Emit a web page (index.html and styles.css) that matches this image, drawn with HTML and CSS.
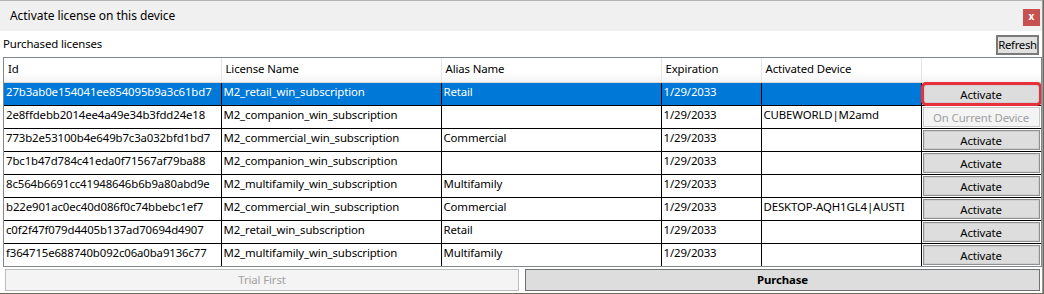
FILE: index.html
```html
<!DOCTYPE html>
<html>
<head>
<meta charset="utf-8">
<link rel="stylesheet" href="styles.css">
</head>
<body>
<div class="window">
  <div class="titlebar">
    <span class="title">Activate license on this device</span>
    <span class="close">x</span>
  </div>
  <div class="content">
    <div class="toolbar">
      <span class="label">Purchased licenses</span>
      <button class="btn refresh">Refresh</button>
    </div>
    <div class="grid">
      <table>
        <colgroup>
          <col class="c-id"><col class="c-name"><col class="c-alias"><col class="c-exp"><col class="c-dev"><col class="c-act">
        </colgroup>
        <thead>
          <tr><th>Id</th><th>License Name</th><th>Alias Name</th><th>Expiration</th><th>Activated Device</th><th></th></tr>
        </thead>
        <tbody>
          <tr class="sel"><td>27b3ab0e154041ee854095b9a3c61bd7</td><td>M2_retail_win_subscription</td><td>Retail</td><td>1/29/2033</td><td></td><td class="act"><button class="btn row-btn hl">Activate</button></td></tr>
          <tr><td>2e8ffdebb2014ee4a49e34b3fdd24e18</td><td>M2_companion_win_subscription</td><td></td><td>1/29/2033</td><td>CUBEWORLD|M2amd</td><td class="act"><button class="btn row-btn disabled">On Current Device</button></td></tr>
          <tr><td>773b2e53100b4e649b7c3a032bfd1bd7</td><td>M2_commercial_win_subscription</td><td>Commercial</td><td>1/29/2033</td><td></td><td class="act"><button class="btn row-btn">Activate</button></td></tr>
          <tr><td>7bc1b47d784c41eda0f71567af79ba88</td><td>M2_companion_win_subscription</td><td></td><td>1/29/2033</td><td></td><td class="act"><button class="btn row-btn">Activate</button></td></tr>
          <tr><td>8c564b6691cc41948646b6b9a80abd9e</td><td>M2_multifamily_win_subscription</td><td>Multifamily</td><td>1/29/2033</td><td></td><td class="act"><button class="btn row-btn">Activate</button></td></tr>
          <tr><td>b22e901ac0ec40d086f0c74bbebc1ef7</td><td>M2_commercial_win_subscription</td><td>Commercial</td><td>1/29/2033</td><td>DESKTOP-AQH1GL4|AUSTI</td><td class="act"><button class="btn row-btn">Activate</button></td></tr>
          <tr><td>c0f2f47f079d4405b137ad70694d4907</td><td>M2_retail_win_subscription</td><td>Retail</td><td>1/29/2033</td><td></td><td class="act"><button class="btn row-btn">Activate</button></td></tr>
          <tr><td>f364715e688740b092c06a0ba9136c77</td><td>M2_multifamily_win_subscription</td><td>Multifamily</td><td>1/29/2033</td><td></td><td class="act"><button class="btn row-btn">Activate</button></td></tr>
        </tbody>
      </table>
    </div>
    <div class="footer">
      <button class="btn big disabled">Trial First</button>
      <button class="btn big primary">Purchase</button>
    </div>
  </div>
</div>
</body>
</html>
```

FILE: styles.css
```css
* { box-sizing: border-box; }
html, body { margin: 0; padding: 0; }
body {
  width: 1044px;
  height: 294px;
  overflow: hidden;
  background: #6b6b5a;
  font-family: "Noto Sans", "Open Sans", sans-serif;
  font-size: 11.4px;
  letter-spacing: -0.12px;
  color: #000;
}
.window {
  width: 1043px;
  height: 293px;
  background: #fff;
  border-top: 1px solid #b4b4b4;
  border-right: 1px solid #9a9a9a;
  display: flex;
  flex-direction: column;
}
.titlebar {
  height: 30px;
  flex: none;
  background: #f0f0f0;
  display: flex;
  align-items: center;
  justify-content: space-between;
  padding: 0 2px 0 10px;
}
.title { font-size: 12px; margin-top: -2px; letter-spacing: -0.05px; }
.close {
  width: 17px;
  height: 17px;
  background: #c75050;
  color: #fff;
  font-weight: bold;
  font-size: 10px;
  line-height: 15px;
  text-align: center;
  margin-top: 2px;
  letter-spacing: 0;
}
.content {
  flex: 1;
  display: flex;
  flex-direction: column;
  padding: 0 0 0 3px;
}
.toolbar {
  height: 26px;
  flex: none;
  display: flex;
  align-items: flex-start;
  justify-content: space-between;
  padding-top: 4px;
  padding-right: 3px;
}
.label { line-height: 14px; margin-top: 2px; }
.btn {
  font-family: inherit;
  font-size: 11.4px;
  letter-spacing: -0.12px;
  color: #000;
  background: #e1e1e1;
  border: 1px solid #adadad;
  padding: 0;
  margin: 0;
}
.refresh {
  width: 43px;
  height: 20px;
  border: 2px solid #7a7a7a;
  line-height: 14px;
  white-space: nowrap;
  overflow: hidden;
  letter-spacing: -0.3px;
}
.grid {
  flex: none;
  border: 1px solid #828790;
  width: 1039px;
  height: 210px;
  overflow: hidden;
}
table {
  border-collapse: collapse;
  table-layout: fixed;
  width: 1037px;
}
.c-id { width: 217px; }
.c-name { width: 220px; }
.c-alias { width: 220px; }
.c-exp { width: 100px; }
.c-dev { width: 160px; }
.c-act { width: 120px; }
thead tr { height: 24px; }
tbody tr { height: 23px; }
th {
  font-weight: normal;
  text-align: left;
  padding: 0 4px 1px 4px;
  line-height: 14px;
  background: linear-gradient(#ffffff, #ffffff 60%, #f4f4f4);
  border-right: 1px solid #e5e5e5;
  border-bottom: 1px solid #d5d5d5;
  white-space: nowrap;
}
th:last-child { border-right: none; }
td {
  padding: 0 2px 3px 2px;
  line-height: 14px;
  border: 1px solid #000;
  white-space: nowrap;
  overflow: hidden;
  vertical-align: middle;
}
tbody tr:first-child td { border-top: none; }
td:first-child { border-left: none; }
td:last-child { border-right: none; }
tbody tr:last-child td { border-bottom: none; }
tr.sel td { background: #0078d7; color: #fff; }
tr.sel td.act { background: #fff; }
td.act { padding: 0 0 0 1px; vertical-align: middle; overflow: visible; }
.row-btn {
  display: block;
  width: 117px;
  height: 20px;
  border: 1px solid #8f8f8f;
  box-shadow: inset 0 0 0 1px #d0d0d0;
  background: #dddddd;
  line-height: 16px;
  padding-top: 2px;
}
.row-btn.hl {
  outline: 3px solid #e8303a;
  outline-offset: -1px;
  border-radius: 3px;
}
.row-btn.disabled, .big.disabled {
  background: #f4f4f4;
  border-color: #c8c8c8;
  box-shadow: none;
  color: #a0a0a0;
}
.footer {
  flex: none;
  display: flex;
  gap: 6px;
  padding: 2px 0 0 2px;
}
.big {
  height: 22px;
  flex: none;
  line-height: 18px;
}
.big.disabled { width: 514px; border-color: #bcbcbc; }
.big.primary {
  width: 515px;
  background: #dddddd;
  border-color: #707070;
  font-weight: bold;
}
```
